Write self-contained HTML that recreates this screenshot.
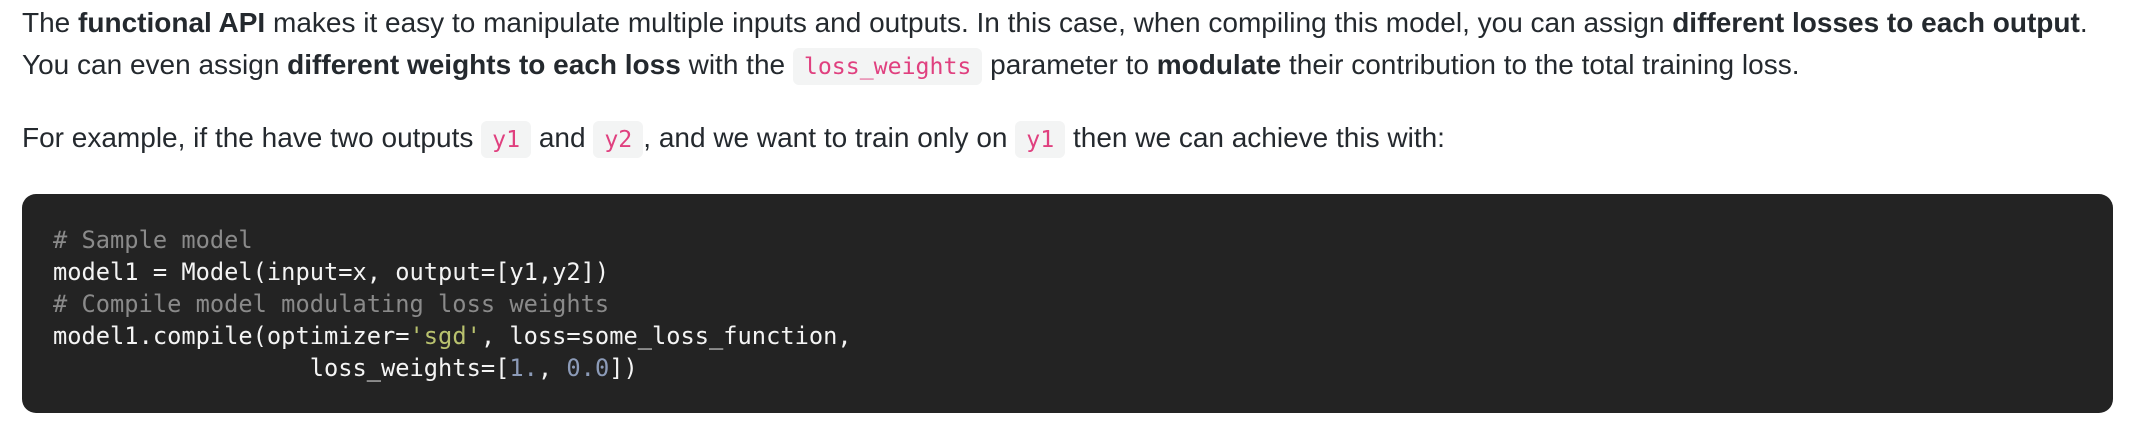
<!DOCTYPE html>
<html><head><meta charset="utf-8"><style>
html,body{margin:0;padding:0;background:#fff;width:2152px;height:440px;overflow:hidden}
.p{position:absolute;left:22px;font-family:"Liberation Sans",Helvetica,Arial,sans-serif;font-size:28px;line-height:42px;color:#24292e;white-space:nowrap}
b{font-weight:bold}
code{font-family:"DejaVu Sans Mono",monospace;font-size:23.2px;color:#e0407f;background:#f3f4f4;border-radius:6px;padding:5px 11px}
pre{position:absolute;left:22px;top:194px;width:2091px;height:219px;margin:0;box-sizing:border-box;background:#232323;border-radius:14px;padding:30px 31px;font-family:"DejaVu Sans Mono",monospace;font-size:23.7px;line-height:32px;color:#f4f4f4}
.c{color:#8a8a8a}.s{color:#b9c26e}.n{color:#8c9bb8}
</style></head><body>
<div class="p" style="top:2px">The <b>functional API</b> makes it easy to manipulate multiple inputs and outputs. In this case, when compiling this model, you can assign <b>different losses to each output</b>.<br>You can even assign <b>different weights to each loss</b> with the <code>loss_weights</code> parameter to <b>modulate</b> their contribution to the total training loss.</div>
<div class="p" style="top:117px">For example, if the have two outputs <code>y1</code> and <code>y2</code>, and we want to train only on <code>y1</code> then we can achieve this with:</div>
<pre><span class="c"># Sample model</span>
model1 = Model(input=x, output=[y1,y2])
<span class="c"># Compile model modulating loss weights</span>
model1.compile(optimizer=<span class="s">'sgd'</span>, loss=some_loss_function,
                  loss_weights=[<span class="n">1.</span>, <span class="n">0.0</span>])</pre>
</body></html>
